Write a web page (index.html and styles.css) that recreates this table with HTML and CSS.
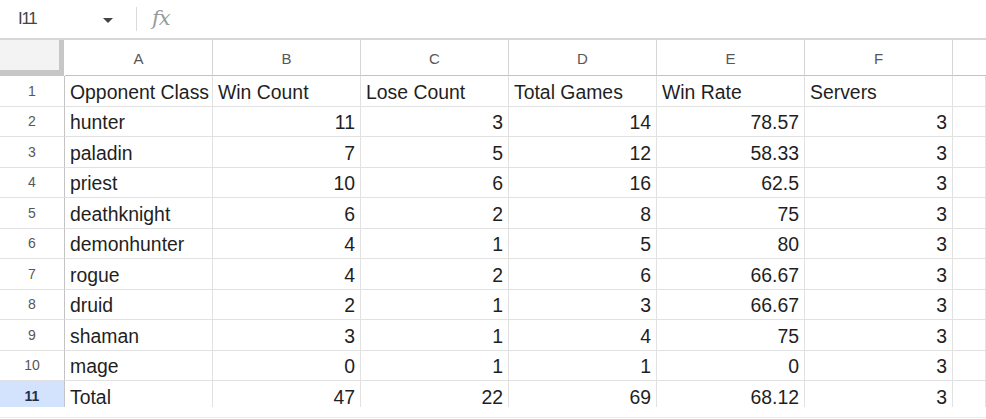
FILE: index.html
```html
<!DOCTYPE html>
<html>
<head>
<meta charset="utf-8">
<link rel="stylesheet" href="styles.css">
</head>
<body>
<div class="topbar">
  <div class="namebox">I11</div>
  <div class="caret"></div>
  <div class="sep"></div>
  <div class="fx">fx</div>
</div>
<div class="sheet">
  <div class="grid">
    <div class="corner"></div>
    <div class="ch">A</div><div class="ch">B</div><div class="ch">C</div><div class="ch">D</div><div class="ch">E</div><div class="ch">F</div><div class="ch last"></div>

    <div class="rh">1</div><div class="c">Opponent Class</div><div class="c">Win Count</div><div class="c">Lose Count</div><div class="c">Total Games</div><div class="c">Win Rate</div><div class="c">Servers</div><div class="c"></div>
    <div class="rh">2</div><div class="c">hunter</div><div class="c n">11</div><div class="c n">3</div><div class="c n">14</div><div class="c n">78.57</div><div class="c n">3</div><div class="c"></div>
    <div class="rh">3</div><div class="c">paladin</div><div class="c n">7</div><div class="c n">5</div><div class="c n">12</div><div class="c n">58.33</div><div class="c n">3</div><div class="c"></div>
    <div class="rh">4</div><div class="c">priest</div><div class="c n">10</div><div class="c n">6</div><div class="c n">16</div><div class="c n">62.5</div><div class="c n">3</div><div class="c"></div>
    <div class="rh">5</div><div class="c">deathknight</div><div class="c n">6</div><div class="c n">2</div><div class="c n">8</div><div class="c n">75</div><div class="c n">3</div><div class="c"></div>
    <div class="rh">6</div><div class="c">demonhunter</div><div class="c n">4</div><div class="c n">1</div><div class="c n">5</div><div class="c n">80</div><div class="c n">3</div><div class="c"></div>
    <div class="rh">7</div><div class="c">rogue</div><div class="c n">4</div><div class="c n">2</div><div class="c n">6</div><div class="c n">66.67</div><div class="c n">3</div><div class="c"></div>
    <div class="rh">8</div><div class="c">druid</div><div class="c n">2</div><div class="c n">1</div><div class="c n">3</div><div class="c n">66.67</div><div class="c n">3</div><div class="c"></div>
    <div class="rh">9</div><div class="c">shaman</div><div class="c n">3</div><div class="c n">1</div><div class="c n">4</div><div class="c n">75</div><div class="c n">3</div><div class="c"></div>
    <div class="rh">10</div><div class="c">mage</div><div class="c n">0</div><div class="c n">1</div><div class="c n">1</div><div class="c n">0</div><div class="c n">3</div><div class="c"></div>
    <div class="rh sel">11</div><div class="c">Total</div><div class="c n">47</div><div class="c n">22</div><div class="c n">69</div><div class="c n">68.12</div><div class="c n">3</div><div class="c"></div>
  </div>
</div>
<div class="bottom"></div>
</body>
</html>
```
FILE: styles.css
```css
html, body {
  margin: 0;
  padding: 0;
  background: #fff;
  width: 986px;
  height: 419px;
  overflow: hidden;
  font-family: "Liberation Sans", Arial, sans-serif;
}

.topbar {
  height: 38px;
  display: flex;
  align-items: center;
}

.namebox {
  width: 86px;
  padding-left: 18px;
  box-sizing: border-box;
  font-size: 17px;
  letter-spacing: -1.3px;
  color: #444;
  margin-top: -1px;
}

.caret {
  width: 0;
  height: 0;
  border-left: 5px solid transparent;
  border-right: 5px solid transparent;
  border-top: 5px solid #444;
  margin-left: 17px;
  margin-top: 3px;
}

.sep {
  width: 1px;
  height: 24px;
  background: #dadada;
  margin-left: 23px;
}

.fx {
  margin-left: 15px;
  font-family: "DejaVu Serif", "Liberation Serif", serif;
  font-style: italic;
  font-size: 21px;
  color: #9a9a9a;
  letter-spacing: -1px;
  margin-top: -2px;
}

.sheet {
  border-top: 2px solid #d6d6d6;
  height: 367px;
  overflow: hidden;
}

.grid {
  display: grid;
  grid-template-columns: 65px repeat(6, 148px) 1fr;
  grid-template-rows: 36px;
  grid-auto-rows: 30.5px;
}

.corner {
  background: #f3f3f3;
  border-right: 5px solid #c7c7c7;
  border-bottom: 6px solid #c7c7c7;
  margin-right: 1px;
}

.ch {
  display: flex;
  align-items: center;
  justify-content: center;
  font-size: 15px;
  color: #575757;
  border-right: 1px solid #d5d5d5;
  border-bottom: 1px solid #c4c4c4;
  padding-top: 1px;
}

.ch.last {
  border-right: none;
}

.rh {
  display: flex;
  align-items: center;
  justify-content: center;
  font-size: 14px;
  color: #575757;
  border-right: 1px solid #c4c4c4;
  border-bottom: 1px solid #e1e1e1;
}

.rh.sel {
  background: #d3e3fd;
  color: #1f2f45;
  font-weight: bold;
}

.c {
  display: flex;
  align-items: center;
  font-size: 19.4px;
  color: #1f1f1f;
  padding: 3px 5px 0 5px;
  white-space: nowrap;
  overflow: hidden;
  border-right: 1px solid #e1e1e1;
  border-bottom: 1px solid #e1e1e1;
}

.c.n {
  justify-content: flex-end;
}

.bottom {
  height: 10px;
  border-bottom: 1px solid #eeeeee;
}
```
